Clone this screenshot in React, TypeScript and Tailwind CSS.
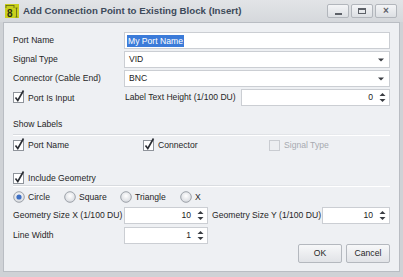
import React from 'react';

const font = { fontFamily: '"Liberation Sans", Arial, sans-serif' };

const Check = ({ checked = true, disabled = false }: { checked?: boolean; disabled?: boolean }) => (
  <svg width="13" height="14" viewBox="0 0 13 14" className="shrink-0">
    <rect x="0.5" y="3.5" width="10" height="10" fill={disabled ? '#eceef1' : '#ffffff'} stroke={disabled ? '#c9ccd1' : '#8f949b'} />
    {checked && <path d="M2.5 8.5 L4.8 11.5 L10.5 1.5" fill="none" stroke="#2a2d33" strokeWidth="1.6" />}
  </svg>
);

const Radio = ({ on = false }: { on?: boolean }) => (
  <svg width="12" height="12" viewBox="0 0 12 12" className="shrink-0">
    <defs>
      <radialGradient id={on ? 'rg1' : 'rg0'} cx="0.5" cy="0.4" r="0.6">
        <stop offset="0" stopColor="#ffffff" />
        <stop offset="1" stopColor="#d6d9de" />
      </radialGradient>
    </defs>
    <circle cx="6" cy="6" r="5.3" fill={`url(#${on ? 'rg1' : 'rg0'})`} stroke="#9da2a9" />
    {on && <circle cx="6" cy="6" r="2.6" fill="#3d6fc4" />}
  </svg>
);

const Spin = ({ value, className }: { value: string; className: string }) => (
  <div className={`h-[17px] bg-white border border-[#cbced3] flex items-center justify-end ${className}`}>
    <span className="text-[#222] mr-[6px]">{value}</span>
    <svg width="7" height="11" viewBox="0 0 7 11" className="mr-[3px]">
      <path d="M0.5 4 L3.5 1 L6.5 4 Z" fill="#3a3d42" />
      <path d="M0.5 7 L3.5 10 L6.5 7 Z" fill="#3a3d42" />
    </svg>
  </div>
);

const Combo = ({ value }: { value: string }) => (
  <div className="flex-1 h-[17px] bg-white border border-[#cbced3] flex items-center justify-between pl-[4px] pr-[5px]">
    <span className="text-[#222]">{value}</span>
    <svg width="6" height="4" viewBox="0 0 6 4">
      <path d="M0 0.5 L6 0.5 L3 3.5 Z" fill="#3a3d42" />
    </svg>
  </div>
);

const WinBtn = ({ children }: { children: React.ReactNode }) => (
  <div className="w-[22px] h-[14px] rounded-[2px] border border-[#b2b6bc] bg-gradient-to-b from-[#f4f5f7] to-[#dcdfe3] flex items-center justify-center">
    {children}
  </div>
);

export default function App() {
  return (
    <div style={font} className="w-[403px] h-[277px] bg-[#cfd2d6] flex flex-col text-[#262626] select-none whitespace-nowrap">
      <div className="h-[22px] flex items-center pl-[5px] pr-[6px] bg-gradient-to-b from-[#e2e4e7] to-[#d5d8dc]">
        <svg width="14" height="14" viewBox="0 0 14 14" className="shrink-0">
          <rect width="14" height="14" fill="#c9d01c" />
          <path d="M1 1.5 H9 M1 1 V4 M9 1 V4 M11.5 4 V13 M10.5 4 H12.5 M10.5 13 H12.5" stroke="#5a5f16" strokeWidth="0.8" />
          <text x="2" y="13" fontSize="10" fontWeight="bold" fill="#2d3010" fontFamily="Liberation Sans, Arial, sans-serif">8</text>
        </svg>
        <span className="ml-[4px] text-[9.7px] font-bold text-[#3d4a5a]">Add Connection Point to Existing Block (Insert)</span>
        <div className="ml-auto flex gap-[2px]">
          <WinBtn>
            <div className="w-[7px] h-[2px] bg-[#5d6168] mt-[5px]" />
          </WinBtn>
          <WinBtn>
            <div className="w-[8px] h-[6px] border border-[#5d6168] border-t-2" />
          </WinBtn>
          <WinBtn>
            <span className="text-[10px] font-bold text-[#5d6168] leading-none">×</span>
          </WinBtn>
        </div>
      </div>

      <div className="mx-[3px] flex-1 mb-[5px] bg-[#eef0f3] border border-[#b9bdc3] px-[9px] pt-[9px] text-[8.6px]">
        <div className="flex flex-col gap-[2px]">
          <div className="flex items-center h-[17px]">
            <span className="w-[111px]">Port Name</span>
            <div className="flex-1 h-[17px] bg-white border border-[#cbced3] flex items-center pl-[2px]">
              <span className="bg-[#3b7bd9] text-white px-[1px] leading-[12px]">My Port Name</span>
            </div>
          </div>
          <div className="flex items-center h-[17px]">
            <span className="w-[111px]">Signal Type</span>
            <Combo value="VID" />
          </div>
          <div className="flex items-center h-[17px]">
            <span className="w-[111px]">Connector (Cable End)</span>
            <Combo value="BNC" />
          </div>
          <div className="flex items-center h-[17px]">
            <div className="w-[111px] flex items-center gap-[2px] -mt-[2px]">
              <Check />
              <span className="mt-[3px]">Port Is Input</span>
            </div>
            <span className="w-[117px] pl-[1px]">Label Text Height (1/100 DU)</span>
            <Spin value="0" className="flex-1" />
          </div>
        </div>

        <div className="mt-[13px] leading-[11px]">Show Labels</div>
        <div className="mt-[4px] h-[2px] bg-gradient-to-r from-[#d8dbdf] via-[#d8dbdf] to-transparent border-b border-white" />

        <div className="flex items-center mt-[1px] h-[14px]">
          <div className="w-[130px] flex items-center gap-[2px]">
            <Check />
            <span className="mt-[3px]">Port Name</span>
          </div>
          <div className="w-[126px] flex items-center gap-[2px]">
            <Check />
            <span className="mt-[3px]">Connector</span>
          </div>
          <div className="flex items-center gap-[2px] text-[#a7aab0]">
            <Check checked={false} disabled />
            <span className="mt-[3px]">Signal Type</span>
          </div>
        </div>

        <div className="flex items-center mt-[19px] h-[14px] gap-[2px]">
          <Check />
          <span className="mt-[3px]">Include Geometry</span>
        </div>
        <div className="mt-[1px] h-[2px] bg-gradient-to-r from-[#d8dbdf] via-[#d8dbdf] to-transparent border-b border-white" />

        <div className="flex items-center mt-[3px] h-[14px]">
          <div className="w-[51px] flex items-center gap-[3px]"><Radio on /><span>Circle</span></div>
          <div className="w-[56px] flex items-center gap-[3px]"><Radio /><span>Square</span></div>
          <div className="w-[60px] flex items-center gap-[3px]"><Radio /><span>Triangle</span></div>
          <div className="flex items-center gap-[3px]"><Radio /><span>X</span></div>
        </div>

        <div className="flex items-center mt-[3px] h-[17px]">
          <span className="w-[111px]">Geometry Size X (1/100 DU)</span>
          <Spin value="10" className="w-[84px]" />
          <span className="w-[114px] pl-[4px]">Geometry Size Y (1/100 DU)</span>
          <Spin value="10" className="flex-1" />
        </div>
        <div className="flex items-center mt-[3px] h-[17px]">
          <span className="w-[111px]">Line Width</span>
          <Spin value="1" className="w-[84px]" />
        </div>

        <div className="flex justify-end gap-[4px]">
          <button className="w-[44px] h-[19px] rounded-[2px] border border-[#b4b8be] bg-gradient-to-b from-[#f7f8f9] to-[#e1e3e7] text-[8.6px] text-[#262626]">OK</button>
          <button className="w-[44px] h-[19px] rounded-[2px] border border-[#b4b8be] bg-gradient-to-b from-[#f7f8f9] to-[#e1e3e7] text-[8.6px] text-[#262626]">Cancel</button>
        </div>
      </div>
    </div>
  );
}
